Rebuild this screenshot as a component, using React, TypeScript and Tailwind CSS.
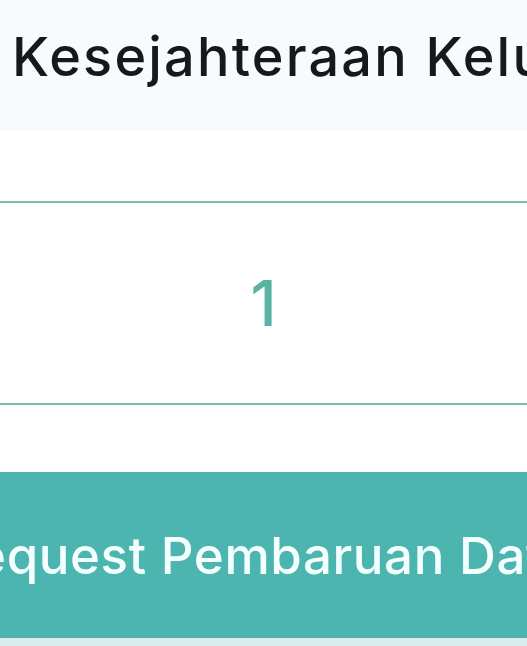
import React from "react";

export default function App() {
  return (
    <div
      className="relative flex h-[646px] w-[527px] flex-col overflow-hidden bg-white"
      style={{ fontFamily: "Inter, 'Noto Sans', sans-serif" }}
    >
      {/* header */}
      <div className="h-[131px] shrink-0 overflow-hidden bg-[#f9fafb] pl-[12px] pt-[22px]">
        <h1 className="whitespace-nowrap text-[54px] font-medium leading-[70px] tracking-[2.2px] text-[#16181d]">
          Kesejahteraan Keluarga
        </h1>
      </div>

      {/* value row */}
      <div className="mt-[70px] flex h-[204px] shrink-0 items-center justify-center border-y-2 border-[#80b9b1]">
        <span className="text-[63px] font-medium leading-none text-[#58b3a2]">1</span>
      </div>

      {/* button */}
      <div className="mt-[67px] flex h-[166px] shrink-0 justify-center">
        <button className="flex w-[640px] shrink-0 items-center justify-center bg-[#4db5b0] pr-[10px] pt-[2px]">
          <span className="whitespace-nowrap text-[51px] font-medium tracking-[0.6px] text-[#f4ffff]">
            Request Pembaruan Data
          </span>
        </button>
      </div>
      <div className="flex-1 bg-[#dcedee]" />
    </div>
  );
}
